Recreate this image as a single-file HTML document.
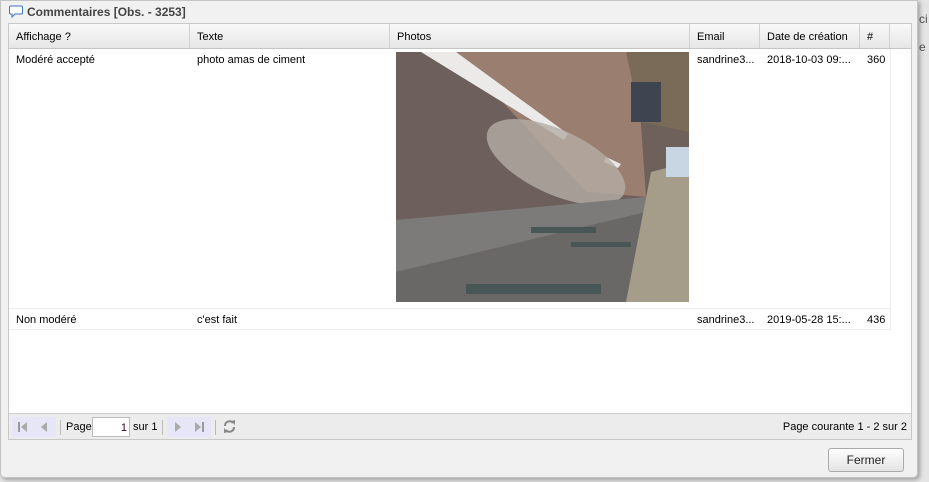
<!DOCTYPE html>
<html><head><meta charset="utf-8"><style>
*{box-sizing:border-box;margin:0;padding:0}
body{width:929px;height:482px;overflow:hidden;background:#e4e4e4;font-family:"Liberation Sans",Arial,sans-serif;font-size:11px;color:#000;position:relative}
.win{position:absolute;left:0;top:0;width:918px;height:478px;background:#f1f1f1;border:1px solid #c4c4c4;border-radius:0 0 5px 5px;box-shadow:2px 2px 4px rgba(0,0,0,.3)}
.title{position:absolute;left:26px;top:4px;font-weight:bold;font-size:12px;color:#444}
.grid{position:absolute;left:7px;top:22px;width:904px;height:417px;border:1px solid #c8c8c8;background:#fff}
.hdr{position:absolute;left:0;top:0;width:902px;height:25px;background:linear-gradient(#f9f9f9,#e6e6e6);border-bottom:1px solid #c5c5c5}
.hc{position:absolute;top:0;height:24px;border-right:1px solid #d0d0d0;padding:7px 0 0 7px}
.cell{position:absolute;padding-left:7px}
.tb{position:absolute;left:0;top:389px;width:902px;height:26px;background:#ececec;border-top:1px solid #cfcfcf}
.btn{position:absolute;left:827px;top:447px;width:76px;height:24px;border:1px solid #aaa;border-radius:3px;background:linear-gradient(#fdfdfd,#e4e4e4);text-align:center;line-height:22px;font-size:12px;color:#222}
.sep{position:absolute;top:6px;width:1px;height:15px;background:#bbb}
</style></head><body>
<div style="position:absolute;left:919px;top:12px;color:#555;font-size:12px">ci</div>
<div style="position:absolute;left:919px;top:40px;color:#555;font-size:12px">e</div>
<div class="win">
<svg style="position:absolute;left:8px;top:4px" width="14" height="13" viewBox="0 0 14 13"><path d="M2 1h10a1.5 1.5 0 0 1 1.5 1.5v5A1.5 1.5 0 0 1 12 9H6l-3 3V9H2A1.5 1.5 0 0 1 .5 7.5v-5A1.5 1.5 0 0 1 2 1z" fill="#fff" stroke="#3a74c0"/></svg>
<div class="title">Commentaires [Obs. - 3253]</div>
<div class="grid">
<div class="hdr">
<div class="hc" style="left:0;width:181px">Affichage ?</div>
<div class="hc" style="left:181px;width:200px">Texte</div>
<div class="hc" style="left:381px;width:300px">Photos</div>
<div class="hc" style="left:681px;width:70px">Email</div>
<div class="hc" style="left:751px;width:100px">Date de création</div>
<div class="hc" style="left:851px;width:30px">#</div>
</div>
<div style="position:absolute;left:0;top:25px;width:882px;height:260px;border-bottom:1px solid #ededed;border-right:1px solid #ededed"></div>
<div style="position:absolute;left:0;top:285px;width:882px;height:21px;border-bottom:1px solid #ededed;border-right:1px solid #ededed"></div>
<div class="cell" style="left:0;top:30px">Modéré accepté</div>
<div class="cell" style="left:181px;top:30px">photo amas de ciment</div>
<div class="cell" style="left:681px;top:30px">sandrine3...</div>
<div class="cell" style="left:751px;top:30px">2018-10-03 09:...</div>
<div class="cell" style="left:851px;top:30px">360</div>
<div class="cell" style="left:0;top:290px">Non modéré</div>
<div class="cell" style="left:181px;top:290px">c'est fait</div>
<div class="cell" style="left:681px;top:290px">sandrine3...</div>
<div class="cell" style="left:751px;top:290px">2019-05-28 15:...</div>
<div class="cell" style="left:851px;top:290px">436</div>
<svg style="position:absolute;left:387px;top:28px" width="293" height="250" viewBox="0 0 293 250">
<rect width="293" height="250" fill="#6e605a"/>
<polygon points="60,0 240,0 250,145 190,140" fill="#9a7e6f"/>
<polygon points="0,0 60,0 190,140 250,145 240,160 0,170" fill="#6d5f5b"/>
<polygon points="25,0 60,0 172,82 168,88" fill="#eceae8"/>
<polygon points="210,105 225,112 222,116 208,110" fill="#e8e6e4"/>
<ellipse cx="160" cy="110" rx="75" ry="32" transform="rotate(25 160 110)" fill="#b4ada5" opacity=".8"/>
<polygon points="0,168 250,145 250,160 0,220" fill="#7d7b79"/>
<polygon points="0,220 250,160 240,250 0,250" fill="#6a6866"/>
<polygon points="230,0 293,0 293,80 245,70" fill="#7a6a58"/>
<rect x="235" y="30" width="30" height="40" fill="#3f4550"/>
<polygon points="255,120 293,110 293,250 230,250" fill="#a59c8a"/>
<rect x="270" y="95" width="23" height="30" fill="#c8d6e4"/>
<rect x="70" y="232" width="135" height="10" fill="#485756"/>
<rect x="135" y="175" width="65" height="6" fill="#485756"/>
<rect x="175" y="190" width="60" height="5" fill="#485756"/>
</svg>
<div class="tb">
<div style="position:absolute;left:3px;top:3px;width:44px;height:20px;background:#e6e6f6"></div>
<svg style="position:absolute;left:8px;top:7px" width="12" height="12"><rect x="1" y="1" width="2" height="10" fill="#999"/><polygon points="10,1 4,6 10,11" fill="#aaa"/></svg>
<svg style="position:absolute;left:30px;top:7px" width="10" height="12"><polygon points="8,1 2,6 8,11" fill="#aaa"/></svg>
<div class="sep" style="left:51px"></div>
<div style="position:absolute;left:57px;top:7px">Page</div>
<div style="position:absolute;left:83px;top:3px;width:38px;height:20px;background:#fff;border:1px solid #bbb;text-align:right;padding:4px 2px 0 0;color:#302">1</div>
<div style="position:absolute;left:124px;top:7px">sur 1</div>
<div class="sep" style="left:153px"></div>
<div style="position:absolute;left:158px;top:3px;width:44px;height:20px;background:#e6e6f6"></div>
<svg style="position:absolute;left:164px;top:7px" width="10" height="12"><polygon points="2,1 8,6 2,11" fill="#aaa"/></svg>
<svg style="position:absolute;left:185px;top:7px" width="12" height="12"><polygon points="1,1 7,6 1,11" fill="#aaa"/><rect x="8" y="1" width="2" height="10" fill="#999"/></svg>
<div class="sep" style="left:206px"></div>
<svg style="position:absolute;left:213px;top:5px" width="15" height="15" viewBox="0 0 15 15"><path d="M3 7a4.5 4.5 0 0 1 8-3M12 8a4.5 4.5 0 0 1-8 3" fill="none" stroke="#888" stroke-width="2"/><polygon points="9,2 13,1 13,6" fill="#888"/><polygon points="6,13 2,14 2,9" fill="#888"/></svg>
<div style="position:absolute;right:4px;top:7px">Page courante 1 - 2 sur 2</div>
</div>
</div>
<div class="btn">Fermer</div>
</div>
</body></html>
